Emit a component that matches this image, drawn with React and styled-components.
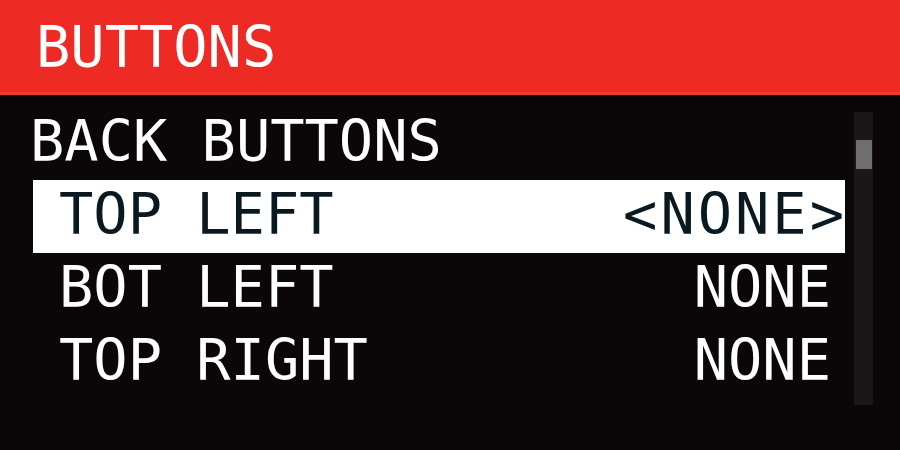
import styled, { createGlobalStyle } from "styled-components";

const GlobalStyle = createGlobalStyle`
  html, body {
    margin: 0;
    padding: 0;
    background: #0b0709;
  }
`;

const rows = [
  { label: "TOP LEFT", value: "NONE", selected: true },
  { label: "BOT LEFT", value: "NONE" },
  { label: "TOP RIGHT", value: "NONE" },
];

export default function App() {
  return (
    <>
      <GlobalStyle />
      <Screen>
        <Header>
          <Title>BUTTONS</Title>
        </Header>

        <Body>
          <List>
            <Section>BACK BUTTONS</Section>
            {rows.map((row) => (
              <Row key={row.label} $selected={row.selected}>
                <span>{row.label}</span>
                <Value $selected={row.selected}>
                  {row.selected ? `<${row.value}>` : row.value}
                </Value>
              </Row>
            ))}
          </List>

          <Track>
            <Thumb />
          </Track>
        </Body>
      </Screen>
    </>
  );
}

const Screen = styled.div`
  width: 900px;
  height: 450px;
  overflow: hidden;
  background: #0b0709;
  color: #ffffff;
  font-family: "DejaVu Sans Mono", "Liberation Mono", monospace;
  font-size: 57px;
`;

const Header = styled.header`
  height: 92px;
  background: #ee2a24;
  border-bottom: 3px solid #f23a2c;
  display: flex;
  align-items: center;
  padding-left: 36px;
`;

const Title = styled.h1`
  margin: 0;
  font-size: inherit;
  font-weight: normal;
  line-height: 1;
  transform: translateY(1px);
`;

const Body = styled.div`
  display: flex;
  align-items: flex-start;
  padding: 12px 27px 0 30px;
  gap: 9px;
`;

const List = styled.div`
  flex: 1;
  display: flex;
  flex-direction: column;
`;

const Section = styled.div`
  height: 73px;
  line-height: 68px;
`;

const Row = styled.div`
  height: 73px;
  line-height: 68px;
  display: flex;
  justify-content: space-between;
  margin-left: 3px;
  padding-left: 26px;
  background: ${(p) => (p.$selected ? "#ffffff" : "transparent")};
  color: ${(p) => (p.$selected ? "#0a1820" : "#ffffff")};
`;

const Value = styled.span`
  padding-right: ${(p) => (p.$selected ? "0" : "14px")};
  margin-right: ${(p) => (p.$selected ? "-2px" : "0")};
  letter-spacing: ${(p) => (p.$selected ? "3px" : "0")};
`;

const Track = styled.div`
  box-sizing: border-box;
  width: 19px;
  height: 293px;
  margin-top: 5px;
  background: #1b1719;
  display: flex;
  flex-direction: column;
  align-items: center;
  padding-top: 28px;
`;

const Thumb = styled.div`
  width: 16px;
  height: 29px;
  background: #6e6e6e;
`;
